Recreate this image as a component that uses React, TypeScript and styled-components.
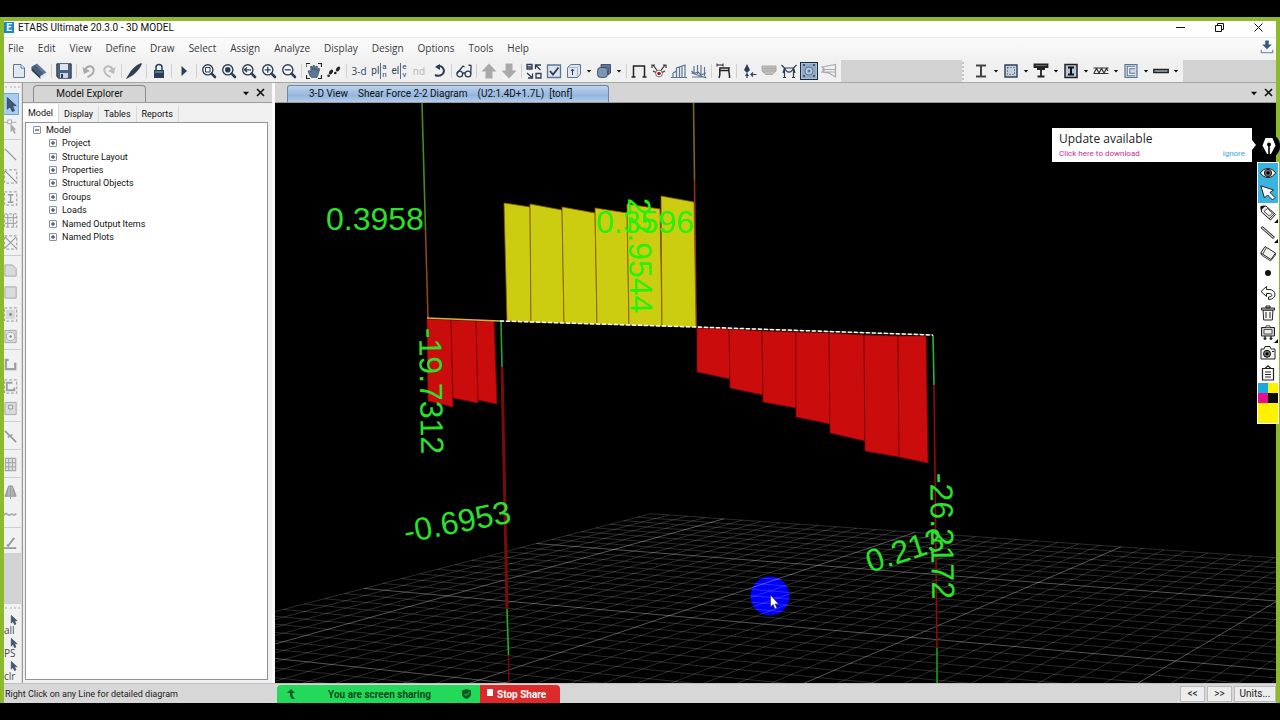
import React from 'react';
import styled, { createGlobalStyle, css } from 'styled-components';

const GlobalStyle = createGlobalStyle`
  * { box-sizing: border-box; }
  html, body { margin: 0; padding: 0; background: #000; }
  button { font: inherit; color: inherit; border: 0; background: none; padding: 0; margin: 0; }
  ul { list-style: none; margin: 0; padding: 0; }
`;

const ui = '"Open Sans", "Noto Sans", sans-serif';
const tahoma = 'Roboto, "Liberation Sans", sans-serif';

const Screen = styled.div`
  height: 100vh;
  min-height: 480px;
  padding: 17px 0;
  background: #000;
  position: relative;
  font-family: ${ui};
  color: #222;
`;
const Frame = styled.div`
  height: 100%;
  display: flex;
  flex-direction: column;
  border: 4px solid #8dba2b;
  border-bottom: 0;
  background: #d5d5d5;
  overflow: hidden;
`;

const TitleBar = styled.header`
  display: flex;
  align-items: center;
  height: 16px;
  flex: none;
  background: #fff;
  font-family: ${tahoma};
  font-size: 10px;
  color: #111;
  padding-bottom: 4px;
`;
const Logo = styled.span`
  width: 10px;
  height: 11px;
  margin-right: 4px;
  background: #1b86cf;
  color: #fff;
  font-size: 10px;
  line-height: 11px;
  font-weight: 700;
  text-align: center;
`;
const WindowButtons = styled.div`
  margin-left: auto;
  display: flex;
  gap: 19px;
  padding-right: 8px;
  button { width: 20px; height: 12px; display: grid; place-items: center; }
`;
const MenuBar = styled.nav`
  display: flex;
  align-items: center;
  gap: 14px;
  height: 23px;
  flex: none;
  padding: 0 1px 2px 4px;
  background: linear-gradient(#fbfbfb, #f1f1f1);
  border-top: 1px solid #e8e8e8;
  font-size: 10px;
  line-height: 14px;
  color: #3a3a3f;
`;
const UpdateButton = styled.button`
  margin-left: auto;
  width: 16px;
  height: 16px;
`;

const ToolBar = styled.div`
  display: flex;
  height: 22px;
  flex: none;
  background: #d2d2d2;
`;
const ToolGroup = styled.div<{ $inset: number }>`
  display: flex;
  align-items: center;
  background: #f0f0f0;
  padding: 0 2px 0 ${p => p.$inset}px;
`;
const Spacer = styled.div<{ $grow: number }>`
  flex: ${p => p.$grow} 1 0;
`;
const Grip = styled.span`
  width: 5px;
  height: 18px;
  margin-right: 4px;
  border-left: 2px dotted #c4c4c4;
`;
const Tool = styled.button<{ $on?: boolean; $narrow?: boolean }>`
  width: ${p => (p.$narrow ? 10 : 20)}px;
  height: 20px;
  display: grid;
  place-items: center;
  ${p => p.$on && css`
    width: 18px;
    height: 18px;
    margin: 0 1px;
    background: #a9bdd6;
    border: 1px solid #1c2c40;
  `}
`;
const Divider = styled.span`
  width: 1px;
  height: 14px;
  margin: 0 2px;
  background: #d0d0d0;
`;
const ViewLabel = styled.span<{ $dim?: boolean }>`
  font-size: 10px;
  line-height: 12px;
  color: ${p => (p.$dim ? '#b4b4b4' : '#34465c')};
`;
const StackLabel = styled.span`
  display: flex;
  align-items: center;
  color: #34465c;
  font-family: ${tahoma};
  font-size: 10px;
  line-height: 12px;
`;
const StackPair = styled.span`
  display: grid;
  margin-left: 1px;
  border-left: 1px solid #5c6c80;
  padding-left: 1px;
  font-size: 8px;
  line-height: 8px;
`;
const StackRow = styled.span`
  display: block;
  height: 8px;
`;

const Work = styled.div`
  display: flex;
  flex: 1;
  min-height: 0;
  border-top: 1px solid #a5a5a5;
`;
const SideBar = styled.div`
  width: 18px;
  flex: none;
  display: flex;
  flex-direction: column;
  background: #f1f1f1;
  border-right: 1px solid #dcdcdc;
`;
const SideGrip = styled.span`
  height: 4px;
  margin: 3px 1px;
  border-top: 2px dotted #cfcfcf;
`;
const SideTool = styled.button<{ $on?: boolean }>`
  height: 22px;
  margin-right: 2px;
  flex: none;
  display: grid;
  place-items: center;
  overflow: hidden;
  ${p => p.$on && css`background: #a8cdf0; border: 1px solid #6ea5da; border-left: 0;`}
`;
const SideRule = styled.span`
  height: 1px;
  flex: none;
  margin: 2px 0 3px;
  background: #cdcdcd;
`;
const SideBlank = styled.span`
  flex: 1;
  background: #d2d2d2;
`;
const SelectTool = styled.button`
  position: relative;
  flex: none;
  height: 23px;
  text-align: left;
  font-size: 10px;
  line-height: 12px;
  padding-top: 8px;
  color: #4a4a52;
  svg { position: absolute; right: 2px; top: 1px; }
`;

const Explorer = styled.section`
  width: 253px;
  flex: none;
  display: flex;
  flex-direction: column;
  background: #f0f0f0;
  border-left: 1px solid #9a9a9a;
  border-right: 3px solid #fafafa;
`;
const PaneHead = styled.div`
  display: flex;
  align-items: flex-end;
  height: 20px;
  flex: none;
  background: #d5d5d5;
  border-bottom: 1px solid #9b9b9b;
  color: #111;
  font-family: ${tahoma};
  font-size: 10px;
`;
const ExplorerTab = styled.h2`
  margin: 0 0 0 10px;
  width: 113px;
  height: 17px;
  border: 1px solid #8b8b8b;
  border-bottom: 0;
  border-radius: 4px 4px 0 0;
  font: inherit;
  line-height: 15px;
  text-align: center;
`;
const DocTab = styled.button`
  margin-left: 12px;
  width: 322px;
  height: 17px;
  display: flex;
  gap: 10px;
  padding-left: 21px;
  border: 1px solid #6d86a6;
  border-bottom: 0;
  border-radius: 3px 3px 0 0;
  background: linear-gradient(#bcd3ec, #93b5de 60%, #b4cdea);
  line-height: 15px;
  white-space: pre;
`;
const PaneButtons = styled.div<{ $end: number }>`
  margin-left: auto;
  padding-right: ${p => p.$end}px;
  height: 19px;
  display: flex;
  align-items: center;
  button { width: 14px; height: 14px; display: grid; place-items: center; }
`;
const PageTabs = styled.div`
  display: flex;
  align-items: flex-end;
  height: 19px;
  flex: none;
  font-family: ${tahoma};
  font-size: 9px;
`;
const PageTab = styled.button<{ $on?: boolean }>`
  height: ${p => (p.$on ? 18 : 16)}px;
  padding: 0 5px;
  color: #111;
  border-right: 1px solid #d9d9d9;
  background: ${p => (p.$on ? '#fff' : 'transparent')};
  line-height: 14px;
`;
const TreeBox = styled.div`
  flex: 1;
  margin: 0 4px 3px 2px;
  background: #fff;
  border: 1px solid #8f949c;
  font-family: ${tahoma};
  font-size: 9px;
  line-height: 12px;
  color: #111;
  padding: 0 0 0 7px;
`;
const Tree = styled.ul`
  height: 121px;
  display: grid;
  grid-auto-rows: 1fr;
`;
const Node = styled.li<{ $depth: number }>`
  display: flex;
  align-items: center;
  gap: 5px;
  padding-left: ${p => p.$depth * 16}px;
`;
const Toggle = styled.button`
  width: 8px;
  height: 8px;
  display: grid;
  place-items: center;
  border: 1px solid #8b93a5;
  border-radius: 1px;
  background: #f4f5f8;
`;

const Document = styled.main`
  flex: 1;
  min-width: 0;
  display: flex;
  flex-direction: column;
`;
const Canvas = styled.svg`
  flex: 1;
  min-height: 0;
  width: 100%;
  display: block;
  background: #000;
  text { font-family: "Liberation Sans", Arial, sans-serif; font-size: 32px; }
`;

const StatusBar = styled.footer`
  height: 20px;
  flex: none;
  display: flex;
  align-items: center;
  background: #d7d7d7;
  border-top: 1px solid #c0c0c0;
  font-family: ${tahoma};
  font-size: 9px;
  color: #222;
`;
const Hint = styled.span`
  width: 273px;
  padding-left: 1px;
`;
const Sharing = styled.div`
  align-self: flex-end;
  display: flex;
  height: 18px;
  border-radius: 4px 4px 0 0;
  overflow: hidden;
  font-size: 10px;
  font-weight: 700;
`;
const SharingInfo = styled.div`
  width: 203px;
  display: flex;
  align-items: center;
  justify-content: space-between;
  padding: 0 9px 0 10px;
  background: #24d959;
  color: #0b4a1c;
`;
const StopShare = styled.button`
  width: 80px;
  display: flex;
  align-items: center;
  gap: 4px;
  padding-left: 7px;
  background: #dc2a2a;
  color: #fff;
  i { width: 6px; height: 7px; background: #fff; margin-bottom: 3px; }
`;
const StatusButtons = styled.div`
  margin-left: auto;
  display: flex;
  gap: 2px;
`;
const StatusButton = styled.button<{ $wide?: boolean }>`
  width: ${p => (p.$wide ? 42 : 25)}px;
  height: 16px;
  border: 1px solid #bababa;
  background: #ededed;
  font-size: 10px;
  line-height: 12px;
`;

const Notice = styled.aside`
  position: absolute;
  right: 28px;
  top: 128px;
  width: 200px;
  height: 34px;
  padding: 3px 7px;
  background: #fff;
  color: #222;
  &::after {
    content: '';
    position: absolute;
    left: 100%;
    top: 12px;
    border: 5px solid transparent;
    border-left: 4px solid #fff;
    border-right: 0;
  }
  strong { display: block; font-weight: 400; font-size: 12px; line-height: 16px; }
  p { margin: 0; display: flex; justify-content: space-between; font-family: ${tahoma}; font-size: 8px; line-height: 14px; }
  a { text-decoration: none; color: #c92d8f; }
  a:last-child { color: #3ba9d0; }
`;
const PenBadge = styled.div`
  position: absolute;
  right: 0;
  top: 134px;
  width: 23px;
  height: 24px;
  border-radius: 12px;
  background: #000;
  display: grid;
  place-items: center;
`;
const PenBar = styled.div`
  position: absolute;
  right: 1px;
  top: 162px;
  width: 22px;
  padding: 1px;
  background: #fff;
`;
const PenTool = styled.button<{ $on?: boolean }>`
  position: relative;
  width: 20px;
  height: 20px;
  display: grid;
  place-items: center;
  background: ${p => (p.$on ? '#39b4e0' : '#fff')};
`;
const Swatches = styled.div`
  display: grid;
  grid-template-columns: 1fr 1fr;
`;
const Swatch = styled.button<{ $c: string; $full?: boolean }>`
  display: block;
  height: ${p => (p.$full ? 20 : 10)}px;
  grid-column: ${p => (p.$full ? 'span 2' : 'auto')};
  background: ${p => p.$c};
`;

/* ---- toolbar glyphs, each on a 16 unit square ---- */
const ink = '#2c3e55';
const steel = '#5d7694';
const grey = '#a9a9a9';

const lens = (
  <>
    <circle cx="6.8" cy="6.8" r="5.1" fill="#f5f7fa" stroke={ink} strokeWidth="1.4" />
    <path d="M10.6 10.6 14 14" stroke={ink} strokeWidth="2.6" strokeLinecap="round" />
  </>
);
const glyphs: Record<string, React.ReactNode> = {
  page: <><path d="M2.5 1.5H10L13.5 5V14.5H2.5Z" fill="#dfe7f1" stroke={steel} /><path d="M10 1.5V5H13.5" fill="#fff" stroke={steel} /></>,
  book: <><path d="M.5 4 6 .5 15.500 9.500 9.500 13Z" fill={steel} /><path d="M.5 4V7.500L9.500 16V13Z" fill={ink} /><path d="M9.500 13 15.500 9.500V12L9.500 15.800Z" fill="#dde4ec" /><path d="M.5 4 4 1.800 12.500 11 9.500 13Z" fill="#465d79" /></>,
  save: <><path d="M.8.8H15.2V15.2H2.5L.8 13.5Z" fill="#49627f" stroke={ink} /><path d="M4 1H12V7H4Z" fill="#dfe5ec" /><path d="M4 10H12V15H4Z" fill="#c9d3df" /><path d="M5 11H7V15H5Z" fill={ink} /></>,
  undo: <><path d="M4 7C7 1 14 3 12.500 8.500 11.600 11.500 9 13 6.500 14" fill="none" stroke={grey} strokeWidth="2" /><path d="M1.500 4 3 11 9 8Z" fill={grey} /></>,
  redo: <><path d="M12 7C9 1 2 3 3.500 8.500 4.400 11.500 7 13 9.500 14" fill="none" stroke="#bcbcbc" strokeWidth="2" /><path d="M14.500 4 13 11 7 8Z" fill="#bcbcbc" /></>,
  pen: <path d="M15.500 .5C12.500 .5 5.500 6.500 3.500 10.500L.5 15.500 6 12.500C9.500 10.500 15 4 15.500 .5Z" fill={ink} stroke="#1c2a3b" strokeWidth=".5" />,
  lock: <><path d="M5 8V4.500A3 3 0 0 1 11 4.500V8" fill="none" stroke={ink} strokeWidth="1.500" /><path d="M3 7H13V15H3Z" fill={ink} /><path d="M4 8H12V10H4Z" fill={steel} /></>,
  play: <path d="M5.500 3 11 8 5.500 13Z" fill={ink} />,
  zoomWindow: <>{lens}<path d="M4.500 4.500H9V9H4.500Z" fill="none" stroke={ink} /></>,
  zoomAll: <>{lens}<circle cx="6.800" cy="6.800" r="2.800" fill={ink} /></>,
  zoomPrev: <>{lens}<path d="M3.500 6.800H10M6 4.500 3.500 6.800 6 9" fill="none" stroke={ink} strokeWidth="1.300" /></>,
  zoomIn: <>{lens}<path d="M3.800 6.800H9.800M6.800 3.800V9.800" stroke={ink} strokeWidth="1.300" /></>,
  zoomOut: <>{lens}<path d="M3.800 6.800H9.800" stroke={ink} strokeWidth="1.300" /></>,
  hand: <><path d="M0 4V.5H4M12 .5H15.500V4M15.500 12V15.500H12M4 15.500H.5V12" fill="none" stroke="#222" strokeWidth="1.200" /><path d="M4 13 2 8 3.500 7.500 5 9 4.500 3.500 6 3.300 6.800 7 7 2.500H8.500L9 7 10 3 11.500 3.500 11 8 12.500 5 13.800 5.800 12 12 11 14.500H5.500Z" fill={steel} stroke={ink} strokeWidth=".6" /></>,
  feet: <><ellipse cx="5" cy="9" rx="1.700" ry="2.800" transform="rotate(35 5 9)" fill="#222" /><circle cx="2.600" cy="12.800" r="1.300" fill="#222" /><ellipse cx="12" cy="6" rx="1.700" ry="2.800" transform="rotate(35 12 6)" fill="#222" /><circle cx="9.300" cy="10" r="1.300" fill="#222" /></>,
  rotate: <><path d="M6 3.500C12 1.500 15 8 11 11.500 9 13 6 13 4 12" fill="none" stroke={ink} strokeWidth="2" /><path d="M4 4 9 1V7Z" fill={ink} /></>,
  glasses: <g fill="none" stroke={ink} strokeWidth="1.300"><circle cx="3.800" cy="11" r="2.900" /><circle cx="12" cy="11" r="2.900" /><path d="M6.500 10H9.300M1 10.500 7 3 8.500 4M14.800 10.500 15 2.500 12.500 2" /></g>,
  up: <path d="M8 .5 15.500 8.500H11.500V15.500H4.500V8.500H.5Z" fill={grey} />,
  down: <path d="M8 15.500 15.500 7.500H11.500V.5H4.500V7.500H.5Z" fill={grey} />,
  objects: <g fill="none" stroke={ink} strokeWidth="1.300"><path d="M1 1.500H6V6H1ZM10 10.500H15V15H10ZM1 4H6" /><path d="M9.500 6V2H15M9.500 2 14.500 7M1 10 6.500 15M6.500 10.500V15H2" /></g>,
  check: <><path d="M1.500 2H14.500V14.500H1.500Z" fill="#dbe4ef" stroke={steel} strokeWidth="1.300" /><path d="M4 8 7 11.500 12.500 4.500" fill="none" stroke={ink} strokeWidth="1.800" /></>,
  cube: <><path d="M1.500 4.500 5 1.500H14.500V11L11.500 14.500H1.500Z" fill="#dfe6ee" stroke={steel} /><path d="M1.500 4.500H11.500V14.500M11.500 4.500 14.500 1.500" fill="none" stroke="#9aabbd" strokeWidth=".8" /><path d="M6.500 12V6.500M5 8 6.500 6 8 8" fill="none" stroke={ink} /></>,
  solid: <><path d="M5 1.500H14.500V10L12 12V5H5Z" fill={steel} stroke={ink} strokeWidth=".8" /><rect x="1.500" y="4.500" width="10" height="10" rx="3" fill="#7b95b3" stroke={ink} strokeWidth=".8" /></>,
  frame: <path d="M2.500 14V3H13.500V14M.5 14H4.500M11.500 14H15.500" fill="none" stroke="#222" strokeWidth="1.500" />,
  joints: <><path d="M2 2 8 10 14 2M2 8 8 11 14 8M4 2H1V5M12 2H15V5" fill="none" stroke="#333" strokeWidth="1.200" /><circle cx="8" cy="10.500" r="3.400" fill="#fff" stroke="#555" strokeWidth=".8" /><circle cx="8" cy="10.500" r="1.800" fill="#b01818" /></>,
  loads1: <path d="M0 14.500H16M2 10V14M5.500 14V5L14 2V14M8.500 14V4M11 14V3.500M2 10 5.500 8" fill="none" stroke={steel} strokeWidth="1.200" />,
  loads2: <path d="M.5 10 15.500 15M3 3V10M6.500 2V11M10 2V12M13.500 4V13M.5 8 3 10.500 7 9 10 12 15 10M1 14H15" fill="none" stroke={steel} strokeWidth="1.200" />,
  deformed: <><path d="M3 15C5 11 3 8 4 5H13C12 8 14 11 13.500 15M4 7.500H13" fill="none" stroke="#222" strokeWidth="1.500" /><path d="M1 2H7M1 .5V3.500M7 .5V3.500" stroke="#222" /></>,
  react: <><path d="M6 1 9 7 6 10 3 7Z" fill={ink} /><path d="M6 10V15M4.500 13 6 11 7.500 13M15.500 11.500H10M12 9.500 10 11.500 12 13.500" fill="none" stroke={ink} strokeWidth="1.200" /></>,
  soil: <path d="M1 3H15V8L11 11.500H5L1 8ZM1 5.500H15M1 8H15" fill="#bdbdbd" stroke={grey} />,
  moment: <path d="M3.500 14.500V5H12.500V14.500M2 14.500H5M11 14.500H14M3.500 5C6 10.500 10 10.500 12.500 5M.5 2 3.500 5 2 10M15.500 2 12.500 5 14 10" fill="none" stroke={ink} strokeWidth="1.200" />,
  shell: <><path d="M1 1H15V15H1Z" fill="#8fa8c6" /><circle cx="8" cy="8" r="4" fill="#b9cbe0" stroke={steel} /><circle cx="8" cy="8" r="1.500" fill={steel} /><path d="M2 2H4M12 2H14M2 13H4M12 13H14" stroke={ink} strokeWidth="1.500" /></>,
  wall: <path d="M1 4 14.500 1.500V14L8 10 1 9 4 6.500ZM1 6.500H14.500M1 9H14.500" fill="none" stroke={grey} strokeWidth="1.200" />,
  ibeam: <path d="M3 2.500H13M3 13.500H13M8 2.500V13.500" stroke="#444" strokeWidth="2" />,
  column: <><path d="M2 2H14V14H2Z" fill="#c3d0df" stroke={ink} strokeWidth="1.400" /><path d="M4.500 4.500H11.500V11.500H4.500Z" fill="none" stroke={ink} strokeDasharray="1 2" /></>,
  tbeam: <path d="M1.500 1.500H14.500V4H1.500ZM4 6H12M8 6V13M4.500 13.500H11.500" fill="#9fb0c4" stroke="#222" strokeWidth="1.800" />,
  icol: <><path d="M2 1.500H14V14.500H2Z" fill="#b7c5d5" stroke="#222" strokeWidth="1.500" /><path d="M5 4.500H11M5 11.500H11M8 4.500V11.500" stroke="#111" strokeWidth="2" /></>,
  joist: <path d="M.5 5H15.500M.5 10.500H15.500M1 10 3.500 5.500 6 10 8.500 5.500 11 10 13.500 5.500 15 8" fill="none" stroke="#333" strokeWidth="1.200" />,
  channel: <><path d="M2 1.500H14V14.500H2Z" fill="#cfd8e3" stroke={steel} strokeWidth="1.200" /><path d="M12 4.500H5.500V11.500H12" fill="none" stroke={steel} strokeWidth="3.400" /><path d="M12 4.500H5.500V11.500H12" fill="none" stroke="#eef2f6" strokeWidth="1.400" /></>,
  slab: <path d="M.8 6.500H15.200V9.500H.8Z" fill="#9cabbd" stroke="#222" strokeWidth="1.400" />,
  caret: <path d="M4.500 6.500H11.500L8 10.500Z" fill="#111" />,
  update: <><path d="M6 .5H10V5H13.500L8 10.500 2.500 5H6Z" fill="#3d5a7a" /><path d="M1.500 11V14.500H14.500V11" fill="none" stroke="#7e93ab" strokeWidth="1.500" /></>,
  pointer: <path d="M3.500 .5V13L6.500 10.300 8.800 15.500 11.200 14.500 9 9.300H13Z" fill="#405a78" stroke={ink} strokeWidth=".8" />,
  reshape: <><path d="M0 3.500H13" stroke={grey} /><rect x="4" y="1" width="4" height="4" fill="#f5f5f5" stroke={grey} /><path d="M7 5V14L9 12 11 16 12.500 15 11 11.500H13Z" fill={grey} /></>,
  line: <path d="M1 2 13 14" stroke="#8c8c8c" strokeWidth="1.200" />,
  lineBox: <path d="M.5 1H13.500V15H.5Z" fill="none" stroke={grey} strokeWidth="1.300" strokeDasharray="3 2" />,
  plate: <path d="M1 2H9L13 6V14H1Z" fill="#d9d9d9" stroke={grey} />,
  rect: <path d="M1 2H13V14H1Z" fill="#dadada" stroke={grey} />,
  wallU: <path d="M5 3H2V13H12V6" fill="none" stroke="#a0a0a0" strokeWidth="2.500" />,
  opening: <><path d="M1 1.500H13V14.500H1Z" fill="#dadada" stroke={grey} /><path d="M5 4.500H9V8.500H5Z" fill="#f1f1f1" stroke="#8f8f8f" /></>,
  link: <path d="M1 2 13 14M4 9 9 6" stroke="#999" strokeWidth="1.600" />,
  grid: <path d="M1.500 1.500H12.500V14.500H1.500ZM5 1.500V14.500M9 1.500V14.500M1.500 6H12.500M1.500 10.500H12.500" fill="#e2e2e2" stroke={grey} strokeWidth="1.200" />,
  tower: <path d="M5 1H9L13 12H1ZM7 1V15M4 4 3 12M10 4 11 12" fill="#b5b5b5" stroke="#999" />,
  wave: <path d="M0 9C3 4 4 11 7 8 10 6 10 11 13 7" fill="none" stroke={grey} strokeWidth="1.800" />,
  draft: <path d="M0 14H13M4 12 11 3M3 10.500 5.500 12" stroke="#999" strokeWidth="2" />,
};
const lineBoxed = (inner: React.ReactNode) => <>{glyphs.lineBox}{inner}</>;
Object.assign(glyphs, {
  boxBrace: lineBoxed(<path d="M1 2 13 14M5 6 9 10" stroke="#8c8c8c" strokeWidth="1.200" />),
  boxBeam: lineBoxed(<path d="M4 4H10M4 12H10M7 4V12" stroke="#999" strokeWidth="1.500" />),
  boxFloor: lineBoxed(<path d="M4 1V15M10 1V15M1 5H13M1 11H13M6 8H8" stroke={grey} strokeWidth="1.300" />),
  boxCross: lineBoxed(<path d="M1 2 13 14M13 2 1 14" stroke="#999" strokeWidth="1.200" />),
  boxDot: lineBoxed(<><path d="M2 3H12V13H2Z" fill="#d8d8d8" /><circle cx="7" cy="8" r="1.500" fill="#888" /></>),
  ring: <><path d="M1 1.500H13V14.500H1Z" fill="#dadada" stroke={grey} /><circle cx="7" cy="8" r="4.500" fill="#eee" stroke={grey} /><circle cx="7" cy="8" r="1.300" fill="#888" /></>,
  boxWall: lineBoxed(<path d="M9 4H3V12H11V9" fill="none" stroke="#a0a0a0" strokeWidth="2" />),
});

const Glyph = ({ name, size = 16 }: { name: string; size?: number }) => (
  <svg width={size} height={size} viewBox="0 0 16 16" aria-hidden="true">{glyphs[name]}</svg>
);

const mainTools = ('page book | save | undo redo | pen | lock | play | zoomWindow zoomAll zoomPrev zoomIn zoomOut | hand feet | ' +
  '@3d @plan @elev @nd rotate | glasses | up down | objects check cube caret solid caret | frame joints loads1 loads2 | ' +
  'deformed | react soil moment shell wall').split(' ');
const sectionTools = 'ibeam caret column caret tbeam caret icol caret joist caret channel caret slab caret'.split(' ');
const sideTools = ('pointer reshape | line boxBrace boxBeam boxFloor boxCross | plate rect boxDot ring | wallU boxWall opening | ' +
  'link | grid | tower wave | draft').split(' ');

const stacked = (head: string, top: string, bottom: string) => (
  <StackLabel>{head}<StackPair><StackRow>{top}</StackRow><StackRow>{bottom}</StackRow></StackPair></StackLabel>
);
const labels: Record<string, React.ReactNode> = {
  '@3d': <ViewLabel>3-d</ViewLabel>,
  '@plan': stacked('p', 'a', 'n'),
  '@elev': stacked('e', 'e', 'v'),
  '@nd': <ViewLabel $dim>nd</ViewLabel>,
};
labels['@plan'] = stacked('pl', 'a', 'n');
labels['@elev'] = stacked('el', 'e', 'v');

const renderTools = (names: string[]) => names.map((n, i) => {
  if (n === '|') return <Divider key={i} />;
  if (n === 'caret') return <Tool key={i} $narrow aria-label="More"><Glyph name="caret" size={10} /></Tool>;
  return <Tool key={i} $on={n === 'shell'} aria-label={n.replace('@', '')}>{labels[n] ?? <Glyph name={n} />}</Tool>;
});

/* ---- ground grid: a plane of squares seen in perspective ---- */
const corners = [[613.9, 549.5], [1038.3, 582.5], [911, 637.3], [447.6, 595.9]];
const project = (() => {
  const [[x0, y0], [x1, y1], [x2, y2], [x3, y3]] = corners;
  const ax = x1 - x2, ay = y1 - y2, bx = x3 - x2, by = y3 - y2;
  const sx = x0 - x1 + x2 - x3, sy = y0 - y1 + y2 - y3;
  const d = ax * by - bx * ay;
  const g = (sx * by - bx * sy) / d, h = (ax * sy - sx * ay) / d;
  return (u: number, v: number) => {
    const s = u / 20, t = v / 10, w = g * s + h * t + 1;
    return [((x1 - x0 + g * x1) * s + (x3 - x0 + h * x3) * t + x0) / w, ((y1 - y0 + g * y1) * s + (y3 - y0 + h * y3) * t + y0) / w];
  };
})();
const uMin = -4, uMax = 60, vMin = -8, vMax = 50;
const segment = (a: number[], b: number[]) => `M${a[0].toFixed(1)} ${a[1].toFixed(1)}L${b[0].toFixed(1)} ${b[1].toFixed(1)}`;
let minor = '';
let major = '';
for (let u = uMin; u <= uMax; u++) {
  const s = segment(project(u, vMin), project(u, vMax));
  if (u % 10 === 0) major += s; else minor += s;
}
for (let v = vMin; v <= vMax; v++) {
  const s = segment(project(uMin, v), project(uMax, v));
  if (v % 10 === 0) major += s; else minor += s;
}

const positive = [
  '504,203 530,207 531,322 507,321', '530,204 562,210 564,323 531,322', '562,207 595,213 597,324 564,323',
  '595,208 627,213 629,325 597,324', '627,204 660,209 662,326 629,325', '661,196 694,202 696,327 662,326',
];
const negative = [
  '427,319 451,320 453,407 428,401', '451,320 476,321 478,403 453,398', '476,321 494,321 497,404 478,400',
  '697,328 729,329 730,379 697,372', '729,329 762,331 763,395 730,388', '762,331 796,332 796,408 763,402',
  '796,332 829,333 830,424 796,417', '829,333 864,335 865,441 830,433', '864,335 898,336 899,457 865,451',
  '898,336 926,336 928,463 899,457',
];

const Model = () => (
  <Canvas viewBox="275 103 1001 580" preserveAspectRatio="xMidYMid slice" role="img" aria-label="Shear force diagram">
    <circle cx="770" cy="596" r="19.500" fill="#0000fa" />
    <path d={minor} stroke="#fff" strokeOpacity=".17" fill="none" />
    <path d={major} stroke="#fff" strokeOpacity=".33" fill="none" />
    <g fill="none" strokeWidth="1.600">
      <path d="M422 103 425.500 230" stroke="#4a8a1c" />
      <path d="M425.500 230 428 319" stroke="#8a4a18" />
      <path d="M693.500 103 694.500 180" stroke="#75681c" />
      <path d="M694.500 180 696 327" stroke="#8c3210" />
      <path d="M501 321 502 367" stroke="#20a436" />
      <path d="M502 367 507 609" stroke="#7a0b0b" strokeWidth="3" />
      <path d="M507 609 508.500 655" stroke="#1cb51c" />
      <path d="M508.500 655 509 683" stroke="#6e0a0a" />
      <path d="M933 335 934 385" stroke="#23b540" />
      <path d="M934 385 937 648" stroke="#8a0c0c" />
      <path d="M937 648V683" stroke="#13a513" />
    </g>
    {positive.map(p => <polygon key={p} points={p} fill="#cccc10" stroke="#8a5a08" strokeWidth=".8" />)}
    {negative.map(p => <polygon key={p} points={p} fill="#cb0c0c" stroke="#7c0606" strokeWidth=".8" />)}
    <path d="M427 318 500 321" stroke="#d8b040" strokeWidth="1.400" />
    <path d="M500 321 696 327 933 335" fill="none" stroke="#e8e070" strokeOpacity=".4" />
    <path d="M500 321 696 327 933 335" fill="none" stroke="#fff" strokeWidth="1.500" strokeDasharray="4 2" />
    <g fill="#2ae22a">
      <text x="326" y="230">0.3958</text>
      <text x="596" y="233" fill="#22f20c">0.3596</text>
      <text transform="translate(419 328) rotate(89)">-19.7312</text>
      <text transform="translate(628 198) rotate(89)" fill="#22f20c">22.9544</text>
      <text transform="translate(930 473) rotate(89)">-26.2172</text>
      <text transform="translate(406 543) rotate(-11)">-0.6953</text>
      <text transform="translate(870 573) rotate(-18)">0.213</text>
    </g>
    <path d="M770.500 595V607L773 604.500 775 609 777 608 775 604H778.500Z" fill="#fff" stroke="#222" strokeWidth=".6" />
  </Canvas>
);

/* ---- annotation tool glyphs ---- */
const penGlyphs: [string, React.ReactNode, boolean?][] = [
  ['Show', <><path d="M.5 8C4 2 12 2 15.500 8 12 14 4 14 .5 8Z" fill="#fff" stroke="#222" /><circle cx="8" cy="8" r="3.600" fill="#777" stroke="#111" /><circle cx="8" cy="8" r="1.800" fill="#000" /></>],
  ['Cursor', <path d="M.8.8 4.500 13 7.500 10 12.500 15 15 12.500 10 7.500 13.500 5Z" fill="#fff" stroke="#222" />],
  ['Pen', <><path d="M1 1.500 6 1 15.500 9.500 10.500 15 1.500 7Z" fill="#e6e6e6" stroke="#222" /><path d="M1 1.500 4.500 1.200 1.200 4.500Z" fill="#111" stroke="#111" /><path d="M4 6.500 7.500 3.500 12.500 8 9.500 11ZM9 14 14.500 8.500" fill="#fff" stroke="#333" strokeWidth=".9" /></>, true],
  ['Line', <><path d="M1.500 2 14 13" stroke="#222" strokeWidth="2.800" /><path d="M2 2.500 13.500 12.500" stroke="#ccc" strokeWidth="1.200" /></>, true],
  ['Eraser', <><path d="M5 1.500 15.500 8 11 14.500 .8 8Z" fill="#f2f2f2" stroke="#222" /><path d="M6.500 2.500 2.800 9M.8 8 1.500 10 10.500 16 15.500 10V8" fill="none" stroke="#444" /></>],
  ['Size', <circle cx="8" cy="8" r="3" fill="#111" />],
  ['Undo', <path d="M1 6.500 6.500 1.500V4.500H9C17 4.500 17 14.500 8.500 14.500V12C13 12 13 8.500 9 8.500H6.500V11.500Z" fill="#fff" stroke="#222" />],
  ['Clear', <><path d="M3 5H13L12.300 15H3.700Z" fill="#f5f5f5" stroke="#222" /><path d="M1.500 3H14.500V5H1.500ZM6 1H10V3H6ZM6 7V13M10 7V13" fill="#ddd" stroke="#222" /></>],
  ['Board', <><path d="M1.500 2.500H14.500V11H1.500Z" fill="#ccc" stroke="#222" /><path d="M6 .8H10V2.500H6ZM4 4.500H12V9H4Z" fill="#eee" stroke="#555" /><path d="M5 11V15M11 11V15M3.500 13.500H6.500M9.500 13.500H12.500" stroke="#222" strokeWidth="1.300" /></>, true],
  ['Screenshot', <><path d="M1 4H4L5 1.500H10L11 4H15V14H1Z" fill="#f2f2f2" stroke="#222" /><circle cx="7" cy="8.800" r="3.500" fill="#777" stroke="#111" /><circle cx="7" cy="8.800" r="1.500" fill="#000" /><path d="M12 6.500H14" stroke="#222" /></>],
  ['Clipboard', <><path d="M2.500 3.500H13.500V15H2.500Z" fill="#fff" stroke="#222" strokeWidth="1.200" /><path d="M5 3.500 8 .8 11 3.500ZM5 7H11M5 9.500H11M5 12H11" fill="#fff" stroke="#222" strokeWidth="1.200" /></>],
];

const Cross = () => <svg width="9" height="9" viewBox="0 0 9 9"><path d="M1 1 8 8M8 1 1 8" stroke="#111" strokeWidth="1.600" /></svg>;

const branches = ['Project', 'Structure Layout', 'Properties', 'Structural Objects', 'Groups', 'Loads', 'Named Output Items', 'Named Plots'];

export default function App() {
  return (
    <Screen>
      <GlobalStyle />
      <Frame>
        <TitleBar>
          <Logo>E</Logo>ETABS Ultimate 20.3.0 - 3D MODEL
          <WindowButtons>
            <button aria-label="Minimize"><svg width="9" height="9"><path d="M0 4.500H9" stroke="#111" /></svg></button>
            <button aria-label="Restore"><svg width="9" height="9"><path d="M.5 2.500H6.500V8.500H.5ZM2.500 2.500V.5H8.500V6.500H6.500" fill="none" stroke="#111" /></svg></button>
            <button aria-label="Close"><svg width="9" height="9"><path d="M.5.5 8.500 8.500M8.500.5.5 8.500" stroke="#111" /></svg></button>
          </WindowButtons>
        </TitleBar>
        <MenuBar>
          {['File', 'Edit', 'View', 'Define', 'Draw', 'Select', 'Assign', 'Analyze', 'Display', 'Design', 'Options', 'Tools', 'Help'].map(m => <button key={m}>{m}</button>)}
          <UpdateButton aria-label="Download update"><Glyph name="update" size={14} /></UpdateButton>
        </MenuBar>
        <ToolBar>
          <ToolGroup $inset={5}>{renderTools(mainTools)}</ToolGroup>
          <Spacer $grow={122} />
          <ToolGroup $inset={0}><Grip />{renderTools(sectionTools)}</ToolGroup>
          <Spacer $grow={94} />
        </ToolBar>
        <Work>
          <SideBar>
            <SideGrip />
            {sideTools.map((n, i) => n === '|' ? <SideRule key={i} /> : <SideTool key={i} $on={n === 'pointer'} aria-label={n}><Glyph name={n} size={15} /></SideTool>)}
            <SideBlank />
            <SideGrip />
            {['all', 'PS', 'clr'].map(t => <SelectTool key={t}>{t}<Glyph name="pointer" size={10} /></SelectTool>)}
          </SideBar>
          <Explorer>
            <PaneHead>
              <ExplorerTab>Model Explorer</ExplorerTab>
              <PaneButtons $end={5}>
                <button aria-label="Pane menu"><Glyph name="caret" size={14} /></button>
                <button aria-label="Close pane"><Cross /></button>
              </PaneButtons>
            </PaneHead>
            <PageTabs>
              {['Model', 'Display', 'Tables', 'Reports'].map((t, i) => <PageTab key={t} $on={i === 0}>{t}</PageTab>)}
            </PageTabs>
            <TreeBox>
              <Tree>
                <Node $depth={0}><Toggle aria-label="Collapse"><svg width="6" height="6"><path d="M1 3H5" stroke="#333" /></svg></Toggle>Model</Node>
                {branches.map(b => (
                  <Node key={b} $depth={1}>
                    <Toggle aria-label="Expand"><svg width="6" height="6"><path d="M1 3H5M3 1V5" stroke="#333" /></svg></Toggle>{b}
                  </Node>
                ))}
              </Tree>
            </TreeBox>
          </Explorer>
          <Document>
            <PaneHead>
              <DocTab><span>3-D View</span><span>Shear Force 2-2 Diagram</span><span>(U2:1.4D+1.7L)  [tonf]</span></DocTab>
              <PaneButtons $end={1}>
                <button aria-label="View menu"><Glyph name="caret" size={14} /></button>
                <button aria-label="Close view"><Cross /></button>
              </PaneButtons>
            </PaneHead>
            <Model />
          </Document>
        </Work>
        <StatusBar>
          <Hint>Right Click on any Line for detailed diagram</Hint>
          <Sharing>
            <SharingInfo>
              <svg width="10" height="10" viewBox="0 0 10 10"><path d="M4 0 8 4H5.500V7L8 10H5L3 7V4H0Z" fill="#0f5a24" /></svg>
              You are screen sharing
              <svg width="9" height="10" viewBox="0 0 9 10"><path d="M4.500 0 9 1.500V5C9 8 6 9.500 4.500 10 3 9.500 0 8 0 5V1.500Z" fill="#0f5a24" /><path d="M2.500 5 4 6.500 7 3.500" fill="none" stroke="#24d959" /></svg>
            </SharingInfo>
            <StopShare><i />Stop Share</StopShare>
          </Sharing>
          <StatusButtons>
            <StatusButton>{'<<'}</StatusButton>
            <StatusButton>{'>>'}</StatusButton>
            <StatusButton $wide>Units...</StatusButton>
          </StatusButtons>
        </StatusBar>
      </Frame>
      <Notice>
        <strong>Update available</strong>
        <p><a href="#download">Click here to download</a><a href="#ignore">ignore</a></p>
      </Notice>
      <PenBadge>
        <svg width="14" height="18" viewBox="0 0 14 18"><path d="M3.500 1H10.500L13.500 8.500 9 17H5L.5 8.500Z" fill="#fff" /><path d="M7 8V17" stroke="#000" strokeWidth="1.600" /><circle cx="7" cy="7.500" r="2" fill="#000" /></svg>
      </PenBadge>
      <PenBar>
        {penGlyphs.map(([name, art, more], i) => (
          <PenTool key={name} $on={i < 2} aria-label={name}>
            <svg width="20" height="20" viewBox="-2 -2 20 20">{art}{more && <path d="M18 14V18H14Z" fill="#000" />}</svg>
          </PenTool>
        ))}
        <Swatches>
          <Swatch $c="#19a9dd" aria-label="Cyan" /><Swatch $c="#fff200" aria-label="Yellow" />
          <Swatch $c="#e6108a" aria-label="Magenta" /><Swatch $c="#0a0a0a" aria-label="Black" />
          <Swatch $c="#fff200" $full aria-label="Current colour" />
        </Swatches>
      </PenBar>
    </Screen>
  );
}
